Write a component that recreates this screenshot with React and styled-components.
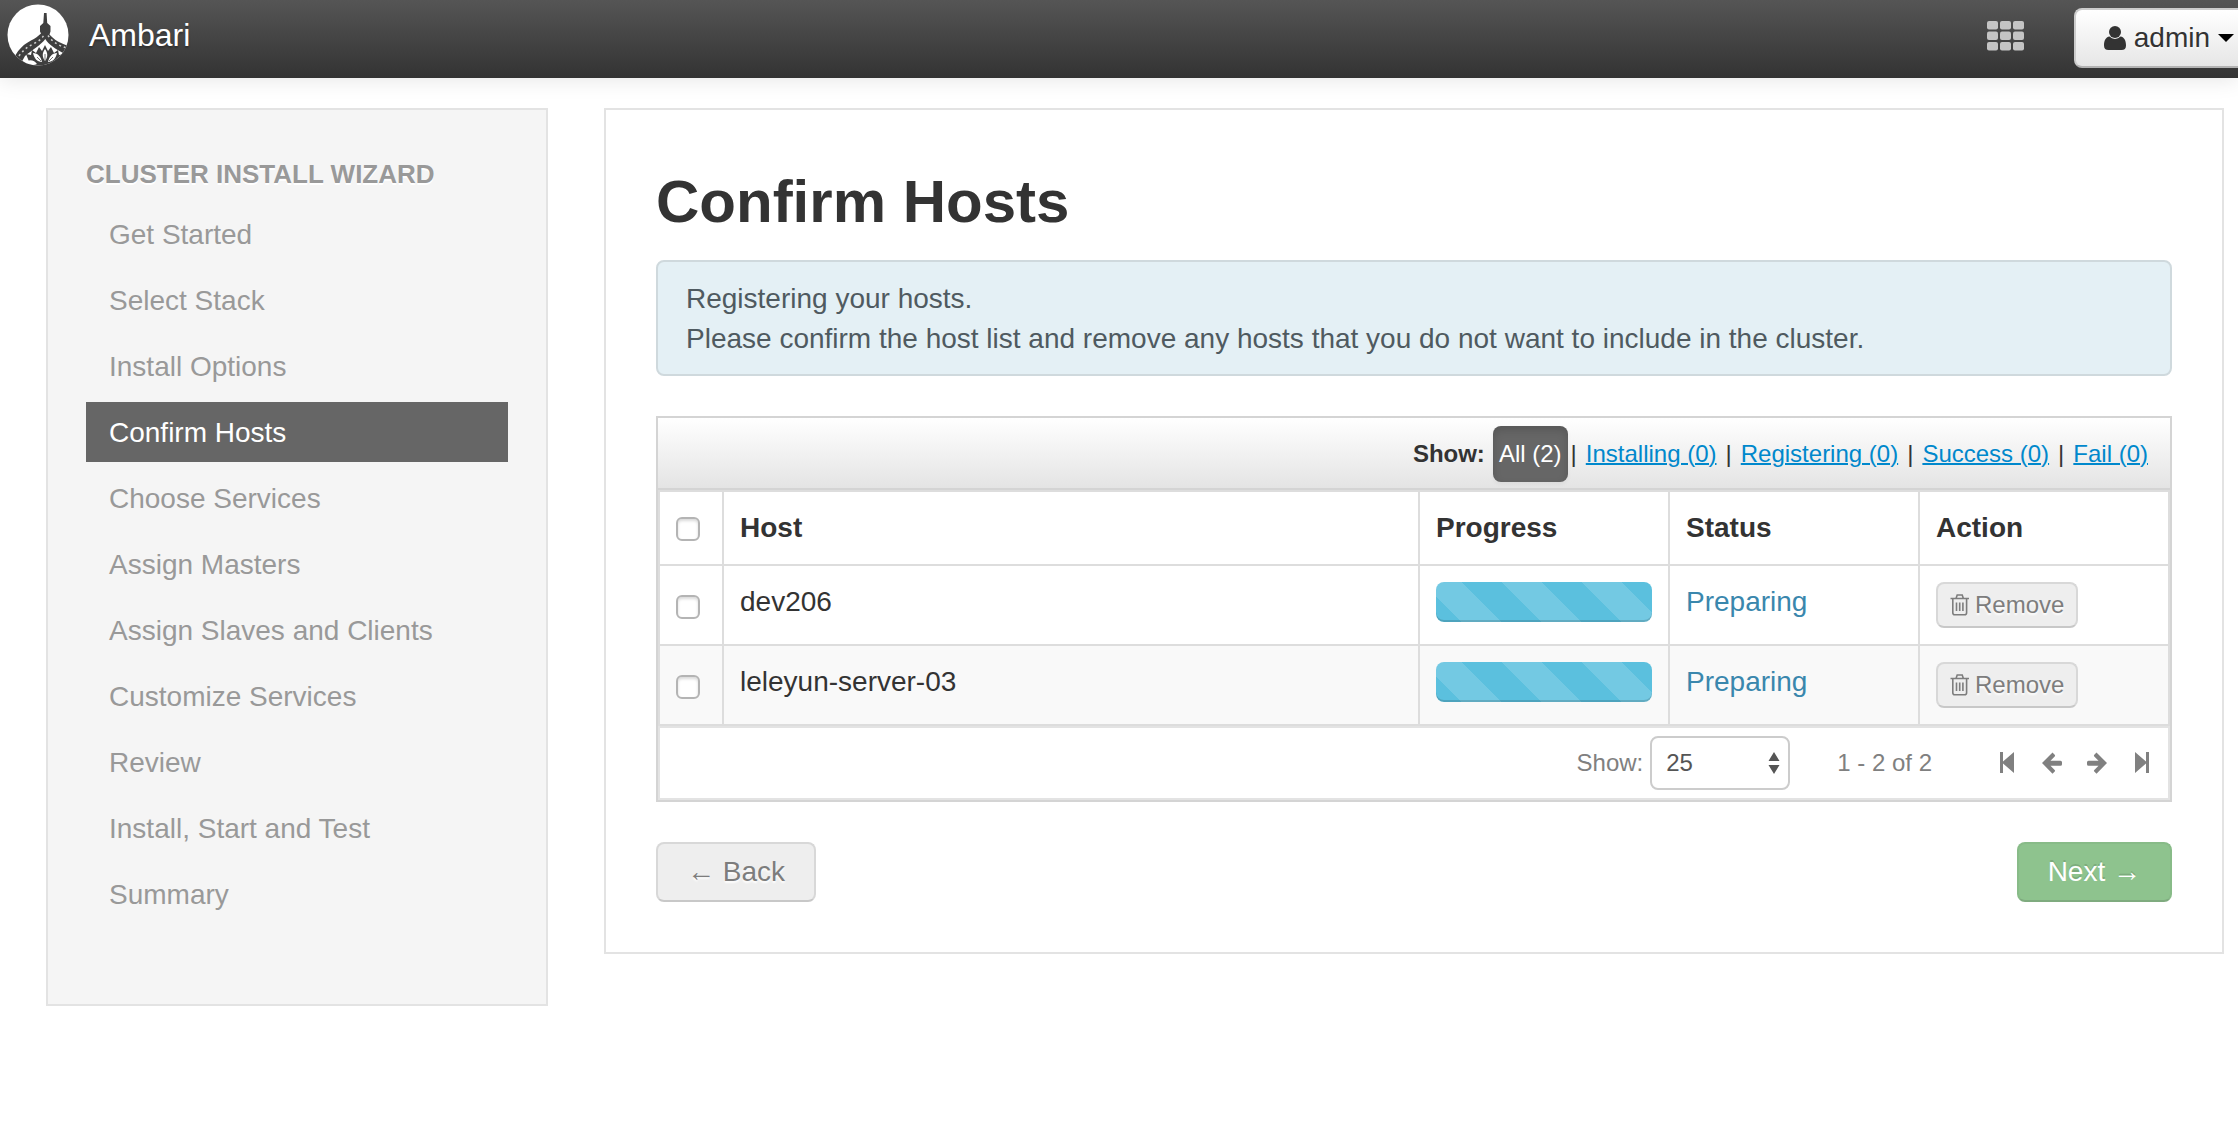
import React from "react";
import styled, { createGlobalStyle } from "styled-components";

const GlobalStyle = createGlobalStyle`
  * {
    box-sizing: border-box;
  }
  body {
    margin: 0;
    background: #fff;
    color: #333;
    font-family: "Liberation Sans", Arial, sans-serif;
    font-size: 28px;
    line-height: 40px;
  }
  button, input, select {
    font: inherit;
    margin: 0;
  }
`;

const Navbar = styled.header`
  display: flex;
  align-items: flex-start;
  height: 78px;
  padding-left: 7px;
  background: linear-gradient(#555, #333);
  box-shadow: 0 2px 20px rgba(0, 0, 0, 0.1);
`;

const Brand = styled.a`
  display: flex;
  gap: 20px;
  color: #fff;
  font-size: 32px;
  line-height: 70px;
  text-decoration: none;
  text-shadow: 0 2px 2px rgba(0, 0, 0, 0.3);

  svg {
    margin-top: 4px;
  }
`;

const ViewsButton = styled.button`
  height: 30px;
  margin: 21px 50px 0 auto;
  padding: 0;
  border: 0;
  background: none;

  svg {
    display: block;
  }
`;

const UserButton = styled.button`
  display: flex;
  align-items: center;
  gap: 8px;
  height: 60px;
  margin-top: 8px;
  padding: 0 4px 0 28px;
  border: 2px solid #ccc;
  border-bottom-color: #b3b3b3;
  border-right: 0;
  border-radius: 8px 0 0 8px;
  background: linear-gradient(#fff, #e6e6e6);
  color: #333;
  text-shadow: 0 2px 2px rgba(255, 255, 255, 0.75);
`;

const Page = styled.div`
  display: flex;
  align-items: flex-start;
  gap: 56px;
  padding: 30px 14px 30px 46px;
`;

const Sidebar = styled.nav`
  flex: 0 0 502px;
  padding: 44px 38px 80px;
  border: 2px solid #e3e3e3;
  background: #f5f5f5;
`;

const SidebarTitle = styled.h2`
  margin: 0 0 10px;
  color: #999;
  font-size: 26px;
  line-height: 40px;
  text-shadow: 0 2px 0 #fff;
  text-transform: uppercase;
`;

const StepList = styled.ul`
  display: flex;
  flex-direction: column;
  gap: 6px;
  margin: 0;
  padding: 0;
  list-style: none;
`;

const StepLink = styled.a`
  display: block;
  padding: 11px 23px 9px;
  background: ${({ $active }) => ($active ? "#666" : "none")};
  color: ${({ $active }) => ($active ? "#fff" : "#999")};
  text-decoration: none;
`;

const Main = styled.main`
  flex: 1;
  min-width: 0;
  padding: 50px;
  border: 2px solid #e3e3e3;
`;

const Title = styled.h1`
  margin: 0;
  padding: 2px 0 18px;
  font-size: 60px;
  line-height: 80px;
`;

const Alert = styled.div`
  margin-bottom: 40px;
  padding: 17px 28px 15px;
  border: 2px solid #cfd9dd;
  border-radius: 8px;
  background: #e4f0f5;
  color: #4f5a60;

  p {
    margin: 0;
  }
`;

const HostBox = styled.section`
  border: 2px solid #d4d4d4;
`;

const FilterBar = styled.div`
  display: flex;
  align-items: center;
  justify-content: flex-end;
  gap: 3px;
  height: 72px;
  padding: 2px 16px 0 0;
  border-bottom: 2px solid #d4d4d4;
  background: linear-gradient(#fff, #e4e4e4);
  font-size: 24px;

  strong {
    margin-right: 5px;
  }
`;

const FilterLink = styled.a`
  padding: 8px 6px;
  border-radius: 8px;
  background: ${({ $active }) => ($active ? "#666" : "none")};
  box-shadow: ${({ $active }) =>
    $active ? "inset 0 4px 8px rgba(0, 0, 0, 0.15), 0 2px 4px rgba(0, 0, 0, 0.05)" : "none"};
  color: ${({ $active }) => ($active ? "#fff" : "#08c")};
  text-decoration: ${({ $active }) => ($active ? "none" : "underline")};
  text-decoration-thickness: 2px;
`;

const HostTable = styled.table`
  width: 100%;
  table-layout: fixed;
  border: 2px solid #ddd;
  border-collapse: separate;
  border-spacing: 0;

  th,
  td {
    height: 72px;
    padding: 16px;
    border-left: 2px solid #ddd;
    text-align: left;
    vertical-align: top;
  }
  td {
    border-top: 2px solid #ddd;
  }
  th:first-child,
  td:first-child {
    border-left: 0;
  }
  tbody tr:nth-child(even) {
    background: #f9f9f9;
  }
`;

const Col = styled.col`
  width: ${({ $width }) => $width}px;
`;

const Checkbox = styled.input`
  appearance: none;
  display: block;
  width: 24px;
  height: 24px;
  margin-top: ${({ $top }) => $top}px;
  border: 2px solid #b4b4b4;
  border-radius: 6px;
  background: #fff;
  box-shadow: inset 0 2px 3px rgba(0, 0, 0, 0.15);
`;

const Progress = styled.div`
  height: 40px;
  border-radius: 8px;
  background-color: #5bc0de;
  background-image: linear-gradient(
    45deg,
    rgba(255, 255, 255, 0.15) 25%,
    transparent 25%,
    transparent 50%,
    rgba(255, 255, 255, 0.15) 50%,
    rgba(255, 255, 255, 0.15) 75%,
    transparent 75%
  );
  background-position: 66px 0;
  background-size: 80px 80px;
  box-shadow: inset 0 -2px 0 rgba(0, 0, 0, 0.15);
`;

const Status = styled.span`
  color: #3a87ad;
`;

const Button = styled.button`
  height: 60px;
  padding: 0 29px;
  border: 2px solid ${({ $primary }) => ($primary ? "#88bb88" : "#d8d8d8")};
  border-bottom-color: ${({ $primary }) => ($primary ? "#7fab7f" : "#c8c8c8")};
  border-radius: 8px;
  background: ${({ $primary }) => ($primary ? "#8ec38e" : "#eee")};
  color: ${({ $primary }) => ($primary ? "#fff" : "#7d7d7d")};
  text-shadow: ${({ $primary }) =>
    $primary ? "0 -2px 0 rgba(0, 0, 0, 0.12)" : "0 2px 2px #fff"};
`;

const RemoveButton = styled(Button)`
  display: flex;
  align-items: center;
  gap: 5px;
  height: 46px;
  padding: 0 12px;
  font-size: 24px;
`;

const Pager = styled.div`
  display: flex;
  align-items: center;
  justify-content: flex-end;
  height: 74px;
  padding-right: 12px;
  border: 2px solid #e3e3e3;
  color: #808080;
  font-size: 24px;
`;

const SelectWrap = styled.div`
  position: relative;
  margin: 0 47px 0 7px;

  svg {
    position: absolute;
    top: 16px;
    right: 10px;
    pointer-events: none;
  }
`;

const Select = styled.select`
  appearance: none;
  display: block;
  width: 140px;
  height: 54px;
  padding: 0 14px;
  border: 2px solid #ccc;
  border-radius: 8px;
  background: #fff;
  color: #555;
`;

const PagerButtons = styled.div`
  display: flex;
  gap: 17px;
  margin-left: 61px;
`;

const PagerButton = styled.button`
  width: 28px;
  height: 28px;
  padding: 0;
  border: 0;
  background: none;
  color: #808080;

  svg {
    display: block;
  }
`;

const Actions = styled.div`
  display: flex;
  justify-content: space-between;
  margin-top: 40px;
`;

const Logo = () => (
  <svg width="62" height="62" viewBox="0 0 62 62" aria-hidden="true">
    <clipPath id="disc">
      <circle cx="31" cy="31" r="30.5" />
    </clipPath>
    <g clipPath="url(#disc)">
      <rect width="62" height="62" fill="#fff" />
      <path
        d="M37 9h2.600l.6 10 3.300 3v5.500l-1 3c4.500 5 11 9.500 20.500 11.500v9l-7-2C49 45 42 41 38.300 35 34 41 25 46 18 52l-5 9H0V54l8-2c4-7 9-12 16-15.500 4-2 7.500-4.500 10-7l-1-2V22l3.300-3z"
        fill="#3f3f3f"
      />
      <path
        d="M12 52c5-7 10-10 16-13 4-2 7-4.500 9-8M41 31.500c4 6 10 10 20 13"
        fill="none"
        stroke="#ccc"
        strokeWidth="1.500"
        strokeDasharray="2 3"
      />
      <path
        d="M21 55l-2-5 5 1 1-5 4 3 3-6 3 4 3-6 3 6 3-4 3 6 4-3 1 5 6-1-3 5 3 5-7 3H24z"
        fill="#3f3f3f"
      />
      <path
        d="M38 45c3 4 3 8 0 12-3-4-3-8 0-12zM26 49c5 0 8 4 9 9-5 0-8-4-9-9zM50 49c-5 0-8 4-9 9 5 0 8-4 9-9zM20 57c4-2 8 0 10 3-4 2-8 1-10-3zM56 57c-4-2-8 0-10 3 4 2 8 1 10-3z"
        fill="#fff"
      />
      <path d="M38 50v7M30 53l4 4M46 53l-4 4" stroke="#777" strokeWidth="1" />
    </g>
  </svg>
);

const GridIcon = () => (
  <svg width="37" height="30" viewBox="0 0 37 30" fill="#c4c4c4" aria-hidden="true">
    {[0, 13, 26].map((x) =>
      [0, 10.5, 21].map((y) => (
        <rect key={`${x}-${y}`} x={x} y={y} width="11" height="8.500" rx="2" />
      ))
    )}
  </svg>
);

const UserIcon = () => (
  <svg width="22" height="26" viewBox="0 0 22 26" fill="#333" aria-hidden="true">
    <circle cx="11" cy="7" r="6" />
    <path d="M5.500 11.500C1.500 12 0 16 0 20.500 0 23.500 1.500 25 4.500 25h13c3 0 4.500-1.500 4.500-4.500 0-4.500-1.500-8.500-5.500-9A7.500 7.500 0 0 1 5.500 11.500z" />
  </svg>
);

const CaretIcon = () => (
  <svg width="16" height="8" viewBox="0 0 16 8" fill="#000" aria-hidden="true">
    <path d="M0 0h16L8 8z" />
  </svg>
);

const TrashIcon = () => (
  <svg
    width="20"
    height="22"
    viewBox="0 0 20 22"
    fill="none"
    stroke="currentColor"
    strokeWidth="1.600"
    aria-hidden="true"
  >
    <path d="M0.500 4.500h18.500M6 4.500l1.200-3.500h5l1.200 3.500M2.800 4.500v14.200q0 2 2 2h9.800q2 0 2-2V4.500" />
    <path d="M6.500 8.500v8.500M9.700 8.500v8.500M12.900 8.500v8.500" />
  </svg>
);

const UpDownIcon = () => (
  <svg width="12" height="22" viewBox="0 0 12 22" fill="#555" aria-hidden="true">
    <path d="M6 0l5.500 9H.5zM6 22l5.500-9H.5z" />
  </svg>
);

const pagerPaths = {
  First: "M7 3h3v9.500L21 3v21L10 14.500V24H7z",
  Previous:
    "M14.500 3.500l2.200 2.200q.8.800 0 1.700l-4.200 4.300h10q1.500 0 1.500 1.500v2q0 1.500-1.500 1.500h-10l4.200 4.200q.8.800 0 1.700l-2.200 2.200L4 14z",
  Next: "M13.500 3.500l-2.200 2.200q-.8.800 0 1.700l4.200 4.300h-10Q4 11.700 4 13.200v2q0 1.500 1.500 1.500h10l-4.200 4.200q-.8.800 0 1.700l2.200 2.200L24 14z",
  Last: "M21 3h-3v9.500L7 3v21l11-9.500V24h3z",
};

const steps = [
  "Get Started",
  "Select Stack",
  "Install Options",
  "Confirm Hosts",
  "Choose Services",
  "Assign Masters",
  "Assign Slaves and Clients",
  "Customize Services",
  "Review",
  "Install, Start and Test",
  "Summary",
];

const filters = [
  "All (2)",
  "Installing (0)",
  "Registering (0)",
  "Success (0)",
  "Fail (0)",
];

const hosts = ["dev206", "leleyun-server-03"];

const App = () => {
  return (
    <>
      <GlobalStyle />
      <Navbar>
        <Brand href="#">
          <Logo />
          Ambari
        </Brand>
        <ViewsButton aria-label="Views">
          <GridIcon />
        </ViewsButton>
        <UserButton>
          <UserIcon />
          admin
          <CaretIcon />
        </UserButton>
      </Navbar>
      <Page>
        <Sidebar>
          <SidebarTitle>Cluster Install Wizard</SidebarTitle>
          <StepList>
            {steps.map((step) => (
              <li key={step}>
                <StepLink href="#" $active={step === "Confirm Hosts"}>
                  {step}
                </StepLink>
              </li>
            ))}
          </StepList>
        </Sidebar>
        <Main>
          <Title>Confirm Hosts</Title>
          <Alert>
            <p>Registering your hosts.</p>
            <p>
              Please confirm the host list and remove any hosts that you do not
              want to include in the cluster.
            </p>
          </Alert>
          <HostBox>
            <FilterBar>
              <strong>Show:</strong>
              {filters.map((filter, i) => (
                <React.Fragment key={filter}>
                  {i > 0 && <span>|</span>}
                  <FilterLink href="#" $active={i === 0}>
                    {filter}
                  </FilterLink>
                </React.Fragment>
              ))}
            </FilterBar>
            <HostTable>
              <colgroup>
                <Col $width={62} />
                <col />
                <Col $width={250} />
                <Col $width={250} />
                <Col $width={250} />
              </colgroup>
              <thead>
                <tr>
                  <th>
                    <Checkbox type="checkbox" aria-label="Select all hosts" $top={9} />
                  </th>
                  <th>Host</th>
                  <th>Progress</th>
                  <th>Status</th>
                  <th>Action</th>
                </tr>
              </thead>
              <tbody>
                {hosts.map((host) => (
                  <tr key={host}>
                    <td>
                      <Checkbox type="checkbox" aria-label={host} $top={13} />
                    </td>
                    <td>{host}</td>
                    <td>
                      <Progress role="progressbar" aria-label={host} />
                    </td>
                    <td>
                      <Status>Preparing</Status>
                    </td>
                    <td>
                      <RemoveButton>
                        <TrashIcon />
                        Remove
                      </RemoveButton>
                    </td>
                  </tr>
                ))}
              </tbody>
            </HostTable>
            <Pager>
              <label htmlFor="page-size">Show:</label>
              <SelectWrap>
                <Select id="page-size" defaultValue="25">
                  <option>10</option>
                  <option>25</option>
                  <option>50</option>
                </Select>
                <UpDownIcon />
              </SelectWrap>
              <span>1 - 2 of 2</span>
              <PagerButtons>
                {Object.entries(pagerPaths).map(([name, d]) => (
                  <PagerButton key={name} aria-label={name}>
                    <svg width="28" height="28" viewBox="0 0 28 28" fill="currentColor">
                      <path d={d} />
                    </svg>
                  </PagerButton>
                ))}
              </PagerButtons>
            </Pager>
          </HostBox>
          <Actions>
            <Button>← Back</Button>
            <Button $primary>Next →</Button>
          </Actions>
        </Main>
      </Page>
    </>
  );
};

export default App;
